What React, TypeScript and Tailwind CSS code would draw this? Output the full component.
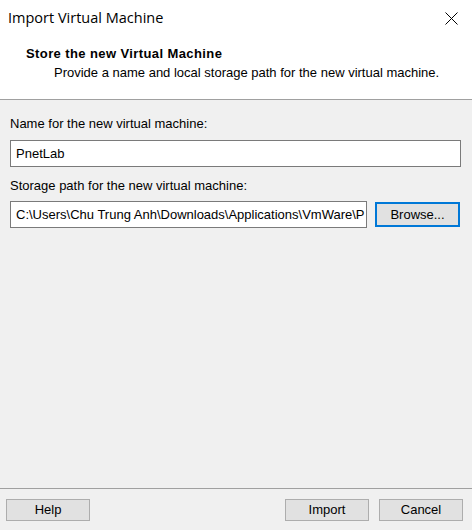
import React from 'react';

const ui = { fontFamily: '"Liberation Sans", Arial, sans-serif' };
const title = { fontFamily: '"Open Sans", "Noto Sans", sans-serif' };

const WinButton: React.FC<{ label: string; focused?: boolean; className?: string }> = ({ label, focused, className }) => (
  <button
    className={
      'flex items-center justify-center bg-[#e1e1e1] text-[13px] text-black ' +
      (focused ? 'border-2 border-[#0078d7] ' : 'border border-[#adadad] ') +
      (className || '')
    }
    style={ui}
  >
    {label}
  </button>
);

const App: React.FC = () => {
  return (
    <div className="w-[472px] h-[530px] flex flex-col bg-[#f0f0f0] overflow-hidden" style={ui}>
      {/* header */}
      <div className="h-[100px] bg-white border-b border-[#a0a0a0] flex flex-col">
        <div className="h-[36px] flex items-center justify-between pl-[8px] pr-[14px]">
          <span className="text-[14.5px] text-black leading-none" style={title}>Import Virtual Machine</span>
          <svg width="13" height="13" viewBox="0 0 13 13">
            <path d="M0.5 0.5 L12.5 12.5 M12.5 0.5 L0.5 12.5" stroke="#000" strokeWidth="1" fill="none" />
          </svg>
        </div>
        <div className="pl-[26px] mt-[10px] text-[13px] font-bold tracking-[0.4px] text-black leading-[16px]">
          Store the new Virtual Machine
        </div>
        <div className="pl-[54px] mt-[3px] text-[13px] text-black leading-[16px]">
          Provide a name and local storage path for the new virtual machine.
        </div>
      </div>

      {/* body */}
      <div className="flex-1 flex flex-col px-[10px] pt-[16px]">
        <div className="text-[13px] text-black leading-[16px]">Name for the new virtual machine:</div>
        <div className="mt-[8px] w-[451px] h-[27px] bg-white border border-[#7a7a7a] flex items-center px-[5px] text-[13px] text-black">
          PnetLab
        </div>
        <div className="mt-[11px] text-[13px] text-black leading-[16px]">Storage path for the new virtual machine:</div>
        <div className="mt-[7px] flex items-start">
          <div className="w-[357px] h-[27px] bg-white border border-[#7a7a7a] flex items-center pl-[5px] text-[13px] text-black overflow-hidden whitespace-nowrap">
            C:\Users\Chu Trung Anh\Downloads\Applications\VmWare\P
          </div>
          <WinButton label="Browse..." focused className="ml-[8px] mt-[1px] w-[85px] h-[25px]" />
        </div>
      </div>

      {/* footer */}
      <div className="h-[42px] border-t border-[#a0a0a0] flex items-start pt-[10px] px-[6px]">
        <WinButton label="Help" className="w-[84px] h-[22px]" />
        <div className="flex-1" />
        <WinButton label="Import" className="w-[84px] h-[22px]" />
        <WinButton label="Cancel" className="ml-[10px] w-[84px] h-[22px]" />
        <div className="w-[3px]" />
      </div>
    </div>
  );
};

export default App;
